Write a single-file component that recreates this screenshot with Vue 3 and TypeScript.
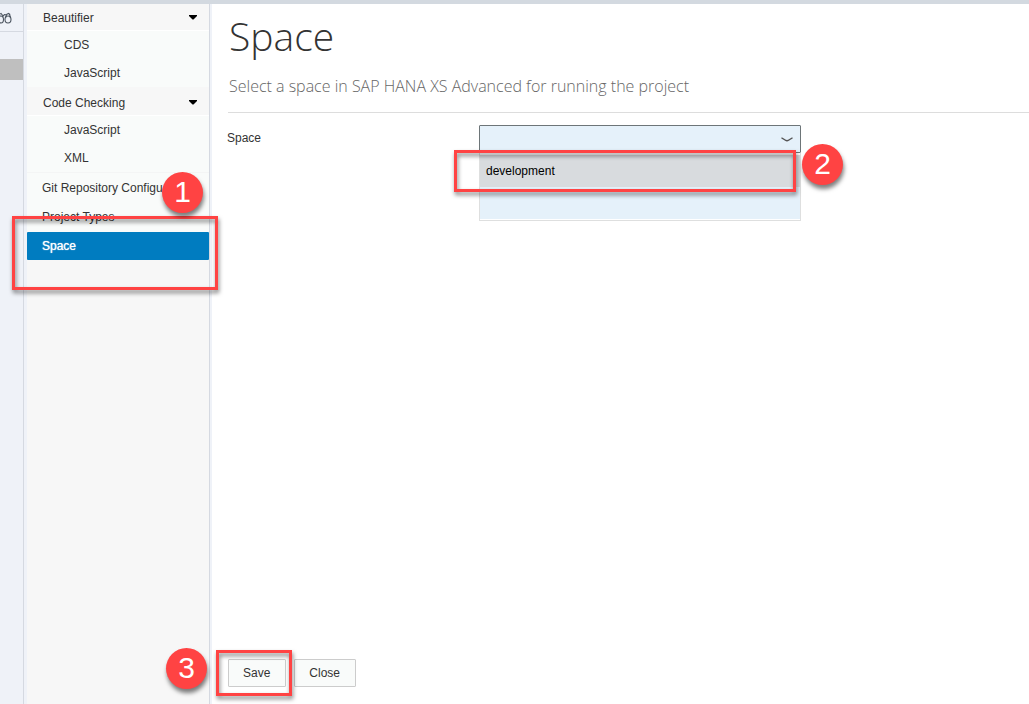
<script setup lang="ts">
import { ref } from 'vue'

interface Group {
  title: string
  items: string[]
}

const groups: Group[] = [
  { title: 'Beautifier', items: ['CDS', 'JavaScript'] },
  { title: 'Code Checking', items: ['JavaScript', 'XML'] },
]
const pages: string[] = ['Git Repository Configu', 'Project Types', 'Space']
const current = ref('Space')
const options: string[] = ['development', '']
const highlighted = ref('development')
const space = ref('')
</script>

<template>
  <div class="page">
    <div class="topbar"></div>
    <div class="body">
      <aside class="rail">
        <div class="rail-head">
          <svg width="12" height="15" viewBox="0 0 12 15" fill="none" stroke="#4c5560" stroke-width="1.1">
            <path d="M-1 4.500 1 3.500 3.500 6.500M2 7 4.500 4.500 7 5M6.500 4.500 8.500 3.500 10 4.500" />
            <ellipse cx="1" cy="9.500" rx="2.500" ry="3.500" />
            <ellipse cx="8" cy="9.500" rx="3" ry="3.500" />
            <path d="M5.500 8 6.500 4.500M9.500 4 10.500 8" />
          </svg>
        </div>
        <div class="rail-active"></div>
      </aside>

      <nav class="sidebar" aria-label="Preferences">
        <section v-for="group in groups" :key="group.title" class="group">
          <button type="button" class="group-head" aria-expanded="true">
            <span>{{ group.title }}</span>
            <svg width="8" height="5" viewBox="0 0 8 5"><path d="M0 0H8V1L4.500 4.500H3.500L0 1Z" fill="#000" /></svg>
          </button>
          <a v-for="item in group.items" :key="item" href="#" class="sub">{{ item }}</a>
        </section>
        <div class="leaves">
          <div v-for="page in pages" :key="page" class="leaf">
            <a href="#" :class="{ active: page === current }" @click.prevent="current = page">{{ page }}</a>
            <template v-if="page === 'Space'">
              <span class="frame frame-nav"></span>
              <span class="badge badge-nav">1</span>
            </template>
          </div>
        </div>
      </nav>

      <main class="main">
        <h1>Space</h1>
        <p class="lead">Select a space in SAP HANA XS Advanced for running the project</p>
        <div class="form">
          <label for="space-select">Space</label>
          <div class="combo">
            <select id="space-select" v-model="space">
              <option v-for="o in options" :key="o" :value="o">{{ o }}</option>
            </select>
            <svg class="chevron" width="12" height="6" viewBox="0 0 12 6" fill="none" stroke="#555" stroke-width="1.4">
              <path d="M.5 1C2 1.200 4 3.500 6 3.800 8 3.500 10 1.200 11.500 1" />
            </svg>
            <ul class="list" role="listbox" aria-label="Space">
              <li
                v-for="o in options"
                :key="o"
                role="option"
                :aria-selected="o === highlighted"
                :class="{ hot: o === highlighted }"
                @click="space = o"
              >{{ o }}</li>
            </ul>
            <span class="frame frame-option"></span>
            <span class="badge badge-option">2</span>
          </div>
        </div>
        <footer class="actions">
          <div class="save">
            <button type="button">Save</button>
            <span class="frame frame-save"></span>
            <span class="badge badge-save">3</span>
          </div>
          <button type="button">Close</button>
        </footer>
      </main>
    </div>
  </div>
</template>

<style>
body {
  margin: 0;
  overflow: hidden;
}
</style>

<style scoped>
* {
  box-sizing: border-box;
}
.page {
  display: flex;
  flex-direction: column;
  min-height: 100vh;
  background: #fff;
  color: #333;
  font: 12px/16px "Liberation Sans", Arial, sans-serif;
}
.topbar {
  height: 4px;
  background: #d3d9e0;
  position: relative;
  z-index: 1;
}
.body {
  display: flex;
  flex: 1;
}
.rail {
  flex: 0 0 24px;
  background: #eff2f8;
  border-right: 1px solid #d5d9e1;
}
.rail-head {
  height: 28px;
  padding-top: 6px;
  border-bottom: 1px solid #d5d9e1;
}
.rail-head svg {
  display: block;
}
.rail-active {
  height: 21px;
  margin-top: 27px;
  background: #bfbfbf;
}
.sidebar {
  flex: 0 0 188px;
  padding: 0 2px 0 3px;
  background:
    linear-gradient(to right, #eff2f8 3px, #f7f7f7 3px, #f7f7f7 185px, #d5d9e1 185px, #d5d9e1 186px, #eff2f8 186px);
}
.group {
  margin-right: 1px;
  background: #f9fbfa;
}
.group:first-child {
  margin-top: -2px;
}
.group-head {
  display: flex;
  align-items: center;
  justify-content: space-between;
  width: 100%;
  height: 29px;
  margin: 0;
  padding: 3px 12px 0 16px;
  border: 0;
  border-bottom: 1px solid #fff;
  background: #f7f7f7;
  color: #333;
  font: inherit;
}
a {
  display: block;
  height: 28px;
  line-height: 28px;
  color: #333;
  text-decoration: none;
  white-space: nowrap;
}
.sub {
  padding-left: 37px;
}
.leaves {
  margin-right: 1px;
  border-top: 1px solid #f4f5f5;
}
.leaf {
  position: relative;
  padding-top: 1px;
  background: #f9fbfa;
}
.leaf a {
  padding-left: 15px;
}
.leaf .active {
  border-radius: 1px;
  background: #007cc0;
  color: #fff;
  text-shadow: 0 0 1px #fff;
}
.main {
  display: flex;
  flex: 1;
  flex-direction: column;
  min-width: 0;
  padding: 0 0 17px 16px;
}
h1 {
  margin: 7px 0 0 1px;
  color: #333;
  font: 300 39px/50px "Open Sans", "Noto Sans", sans-serif;
}
.lead {
  margin: 0;
  padding: 13px 0 14px 1px;
  border-bottom: 1px solid #ddd;
  color: #666;
  font: 300 16px/24px "Open Sans", "Noto Sans", sans-serif;
}
.form {
  display: flex;
  padding-top: 12px;
}
.form label {
  width: 252px;
  margin-left: -1px;
  padding-top: 5px;
}
.combo {
  position: relative;
  width: 322px;
}
select {
  display: block;
  width: 100%;
  height: 28px;
  padding: 0 24px 0 7px;
  appearance: none;
  border: 1px solid #6d7578;
  border-radius: 1px;
  background: #e5f1fa;
  color: #000;
  font: inherit;
}
.chevron {
  position: absolute;
  top: 12px;
  right: 8px;
}
.list {
  position: absolute;
  top: 28px;
  right: 0;
  left: 0;
  margin: 0;
  padding: 2px 0 1px;
  border: 1px solid #dedfdf;
  border-top: 0;
  background: #fff;
  list-style: none;
}
.list li {
  height: 32px;
  padding-left: 6px;
  background: #e5f1fa;
  color: #000;
  line-height: 32px;
}
.list .hot {
  background: #d8dbde;
}
.actions {
  display: flex;
  gap: 8px;
  margin-top: auto;
}
.save {
  position: relative;
}
.actions button {
  height: 28px;
  padding: 0 15px 0 14px;
  border: 1px solid #ccc;
  border-radius: 1px;
  background: #f9fbfa;
  color: #333;
  font: inherit;
}
.frame {
  position: absolute;
  z-index: 2;
  border: 3px solid #ff4343;
  filter: drop-shadow(1px 3px 2px rgba(0, 0, 0, 0.5));
  pointer-events: none;
}
.frame-nav {
  inset: -15px -9px -30px -15px;
}
.frame-option {
  inset: 25px 5px -39px -25px;
}
.frame-save {
  inset: -9px -6px -9px -12px;
}
.badge {
  position: absolute;
  z-index: 3;
  width: 41px;
  height: 41px;
  border-radius: 50%;
  background: #ff4343;
  box-shadow: 1px 4px 4px rgba(0, 0, 0, 0.5);
  color: #fff;
  font-size: 30px;
  line-height: 40px;
  text-align: center;
}
.badge-nav {
  top: -59px;
  left: 135px;
}
.badge-option {
  top: 19px;
  right: -42px;
}
.badge-save {
  top: -11px;
  left: -62px;
}
</style>
